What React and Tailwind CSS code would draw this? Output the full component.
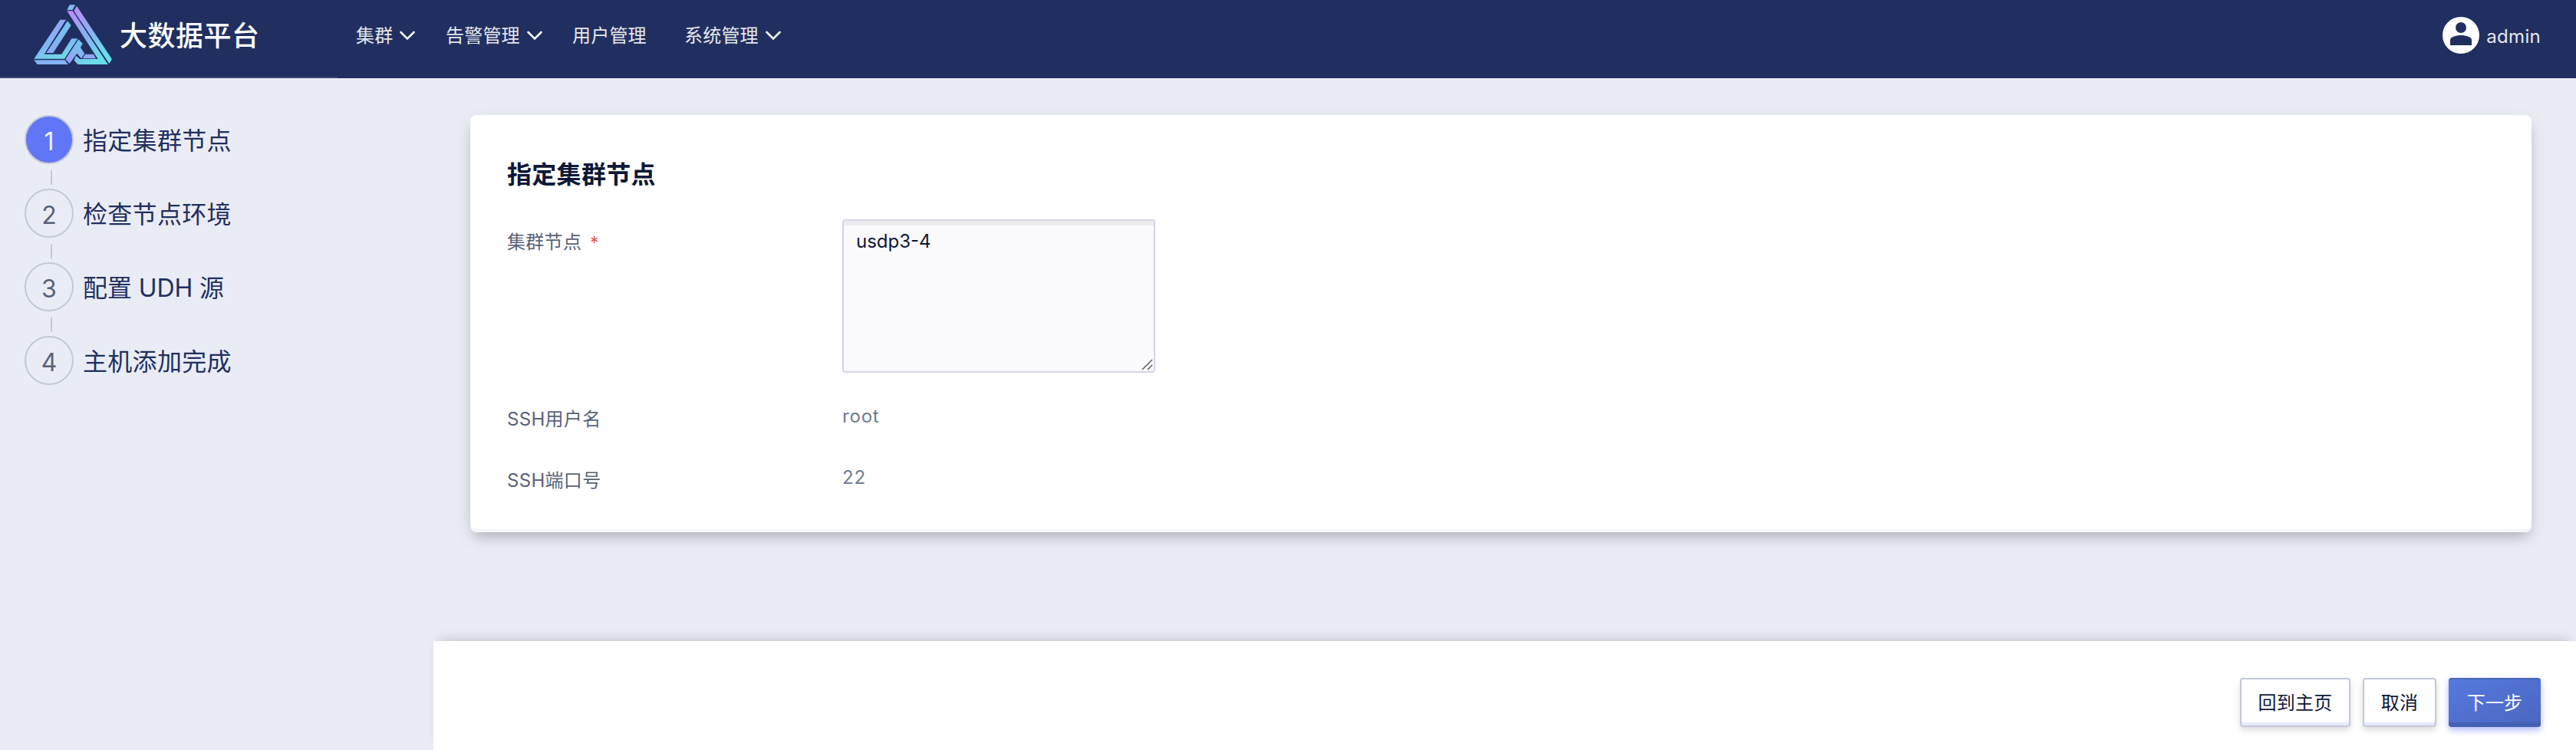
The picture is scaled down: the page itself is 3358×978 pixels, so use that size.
import React from 'react';

const Chevron = () => (
  <svg className="mb-0.5 ml-[7px] h-6 w-6 shrink-0" viewBox="0 0 24 24" fill="none" stroke="#f4f4f6" strokeWidth="2.6">
    <path d="M3.500 8 L12 16.500 L20.500 8" strokeLinecap="round" />
  </svg>
);

const Logo = () => (
  <svg className="ml-11 mt-1.5 h-[78px] w-[103px] shrink-0" viewBox="132 17 309 234">
    <defs>
      <linearGradient id="beam" gradientUnits="userSpaceOnUse" x1="270" y1="40" x2="420" y2="245">
        <stop offset="0" stopColor="#c08af8" />
        <stop offset="0.5" stopColor="#84b4f2" />
        <stop offset="0.85" stopColor="#6bdcea" />
      </linearGradient>
      <linearGradient id="left" gradientUnits="userSpaceOnUse" x1="215" y1="75" x2="265" y2="225">
        <stop offset="0" stopColor="#94a4f6" />
        <stop offset="0.6" stopColor="#7fb9f3" />
        <stop offset="1" stopColor="#6edcea" />
      </linearGradient>
      <linearGradient id="inner" gradientUnits="userSpaceOnUse" x1="270" y1="85" x2="190" y2="205">
        <stop offset="0" stopColor="#70c4ee" />
        <stop offset="1" stopColor="#8fa8f5" />
      </linearGradient>
      <linearGradient id="foot" gradientUnits="userSpaceOnUse" x1="260" y1="240" x2="325" y2="160">
        <stop offset="0" stopColor="#9b9ff7" />
        <stop offset="1" stopColor="#6fc8ee" />
      </linearGradient>
    </defs>
    <path fill="#78bef0" d="M272 18H294L284 38H262Z" />
    <path fill="url(#beam)" d="M262 42H284L422 251H304L290 235L297 217L312 230H383Z" />
    <path fill="url(#beam)" d="M300 22L438 231L427 248L289 42Z" />
    <path fill="url(#left)" d="M235 76H258L173 211H241L280 150H304L252 229H133Z" />
    <path fill="url(#inner)" d="M264 81L278 98L208 206H181Z" />
    <path fill="#83b3f4" d="M133 234H254L266 251H146Z" />
    <path fill="url(#foot)" d="M307 153L323 169L315 185L331 209L318 228L301 208L272 248L256 231Z" />
    <path fill="#8ba7f5" d="M334 211H366L375 228H322Z" />
  </svg>
);

const NavItem = ({ label, menu, className }) => (
  <div className={'flex items-center whitespace-nowrap ' + className}>
    <span className="tracking-[0.2px]">{label}</span>
    {menu && <Chevron />}
  </div>
);

const steps = ['指定集群节点', '检查节点环境', '配置 UDH 源', '主机添加完成'];

const Step = ({ index, label }) => (
  <li className="flex h-24 flex-col">
    <div className="flex h-16 items-center">
      <span
        className={
          'flex h-16 w-16 shrink-0 items-center justify-center rounded-full border-2 border-[#c3c8d9] pt-1.5 text-[32px] leading-none ' +
          (index === 0 ? 'bg-[#6076f6] text-[#eef0fb]' : 'text-[#586379]')
        }
      >
        {index + 1}
      </span>
      <span
        className={
          'ml-3 whitespace-nowrap pt-[3px] text-[32px] leading-[48px] text-[#212f60] ' +
          (index === 2 ? 'tracking-[-0.1px]' : 'tracking-[0.3px]')
        }
      >
        {label}
      </span>
    </div>
    {index < steps.length - 1 && <span className="ml-[34px] mt-2 h-[19px] w-0.5 bg-[#c3c8d9]" />}
  </li>
);

const buttonBase =
  'flex h-16 items-center justify-center whitespace-nowrap rounded-[4px] pt-0.5 text-[24px] leading-none tracking-[0.2px] ';
const plainButton =
  'border-2 border-[#c3c8d9] bg-white text-[#0e1836] shadow-[inset_0_-4px_0_#e4e9fd,0_4px_8px_rgba(0,0,0,0.14)] ';

export default function App() {
  return (
    <div className="flex h-[978px] w-[3358px] flex-col overflow-hidden bg-[#eaecf5] font-['Inter','Noto_Sans_CJK_SC',sans-serif]">
      <header className="flex h-[102px] shrink-0 bg-[#212f60] text-[24px] leading-9 text-[#e6e8ee]">
        <div className="flex w-[440px] border-b-2 border-[#3b4874]">
          <Logo />
          <span className="ml-[9px] mt-5 whitespace-nowrap text-[36px] font-medium leading-[54px] tracking-[0.5px] text-white">
            大数据平台
          </span>
        </div>
        <nav className="flex h-[94px] flex-1 items-center pl-6">
          <NavItem label="集群" menu className="w-[117px]" />
          <NavItem label="告警管理" menu className="w-[165px]" />
          <NavItem label="用户管理" className="w-[146px]" />
          <NavItem label="系统管理" menu className="" />
        </nav>
        <div className="flex h-[92px] items-center pr-[46px]">
          <svg className="h-12 w-12" viewBox="0 0 48 48">
            <circle cx="24" cy="24" r="24" fill="#fff" />
            <circle cx="24" cy="14" r="7" fill="#212f60" />
            <path d="M10 37V30C10 26.500 17 24 24 24S38 26.500 38 30V37Z" fill="#212f60" />
          </svg>
          <span className="ml-[9px] pt-[3px] tracking-[0.3px]">admin</span>
        </div>
      </header>

      <div className="flex flex-1">
        <aside className="w-[565px] shrink-0 pl-8 pt-12">
          <ol>
            {steps.map((label, i) => (
              <Step key={label} index={i} label={label} />
            ))}
          </ol>
        </aside>

        <div className="flex flex-1 flex-col">
          <main className="flex-1 px-12 pt-12">
            <section className="mr-[10px] h-[544px] rounded-lg bg-white px-12 pt-[54px] shadow-[inset_0_-4px_0_#f5f6fc,0_10px_16px_-6px_rgba(0,0,0,0.18),0_8px_24px_-2px_rgba(0,0,0,0.12)]">
              <h1 className="text-[32px] font-bold leading-[48px] tracking-[0.3px] text-[#0e1836]">指定集群节点</h1>
              <div className="mt-[34px] flex text-[24px] leading-9 text-[#586379]">
                <div className="w-[437px] pt-3 tracking-[0.3px]">
                  集群节点<span className="ml-[11px] text-[22px] text-[#ee5440]">*</span>
                </div>
                <div className="relative h-[200px] w-[408px]">
                  <textarea
                    className="block h-full w-full resize-none rounded-[4px] border-2 border-[#d2d5ea] bg-[#fafafc] px-4 py-[9px] text-[24px] leading-9 text-[#0e1836] shadow-[inset_0_6px_0_#ececef] outline-none"
                    defaultValue="usdp3-4"
                  />
                  <svg
                    className="pointer-events-none absolute bottom-[3px] right-[3px] h-[15px] w-[15px]"
                    viewBox="0 0 15 15"
                    fill="none"
                    stroke="#5c5c60"
                    strokeWidth="1.5"
                  >
                    <path d="M1 14L14 1M8 14L14 8" />
                  </svg>
                </div>
              </div>
              <div className="mt-[39px] flex h-10 text-[24px] leading-9 text-[#586379]">
                <div className="w-[437px] pt-1 tracking-[0.3px]">SSH用户名</div>
                <div className="tracking-[0.8px] text-[#6f7b92]">root</div>
              </div>
              <div className="mt-10 flex h-10 text-[24px] leading-9 text-[#586379]">
                <div className="w-[437px] pt-1 tracking-[0.3px]">SSH端口号</div>
                <div className="tracking-[0.8px] text-[#6f7b92]">22</div>
              </div>
            </section>
          </main>
          <footer className="flex h-[142px] shrink-0 justify-end gap-4 bg-white pr-[46px] pt-12 shadow-[0_-8px_16px_-8px_rgba(0,0,0,0.22)]">
            <button className={buttonBase + plainButton + 'w-36'}>回到主页</button>
            <button className={buttonBase + plainButton + 'w-24'}>取消</button>
            <button
              className={
                buttonBase +
                'w-[120px] bg-linear-to-br from-[#567ae0] to-[#4a66bf] text-white shadow-[inset_0_2px_0_#4766bb,inset_0_-6px_0_#4361b3,0_4px_8px_rgba(96,118,246,0.5)]'
              }
            >
              下一步
            </button>
          </footer>
        </div>
      </div>
    </div>
  );
}
